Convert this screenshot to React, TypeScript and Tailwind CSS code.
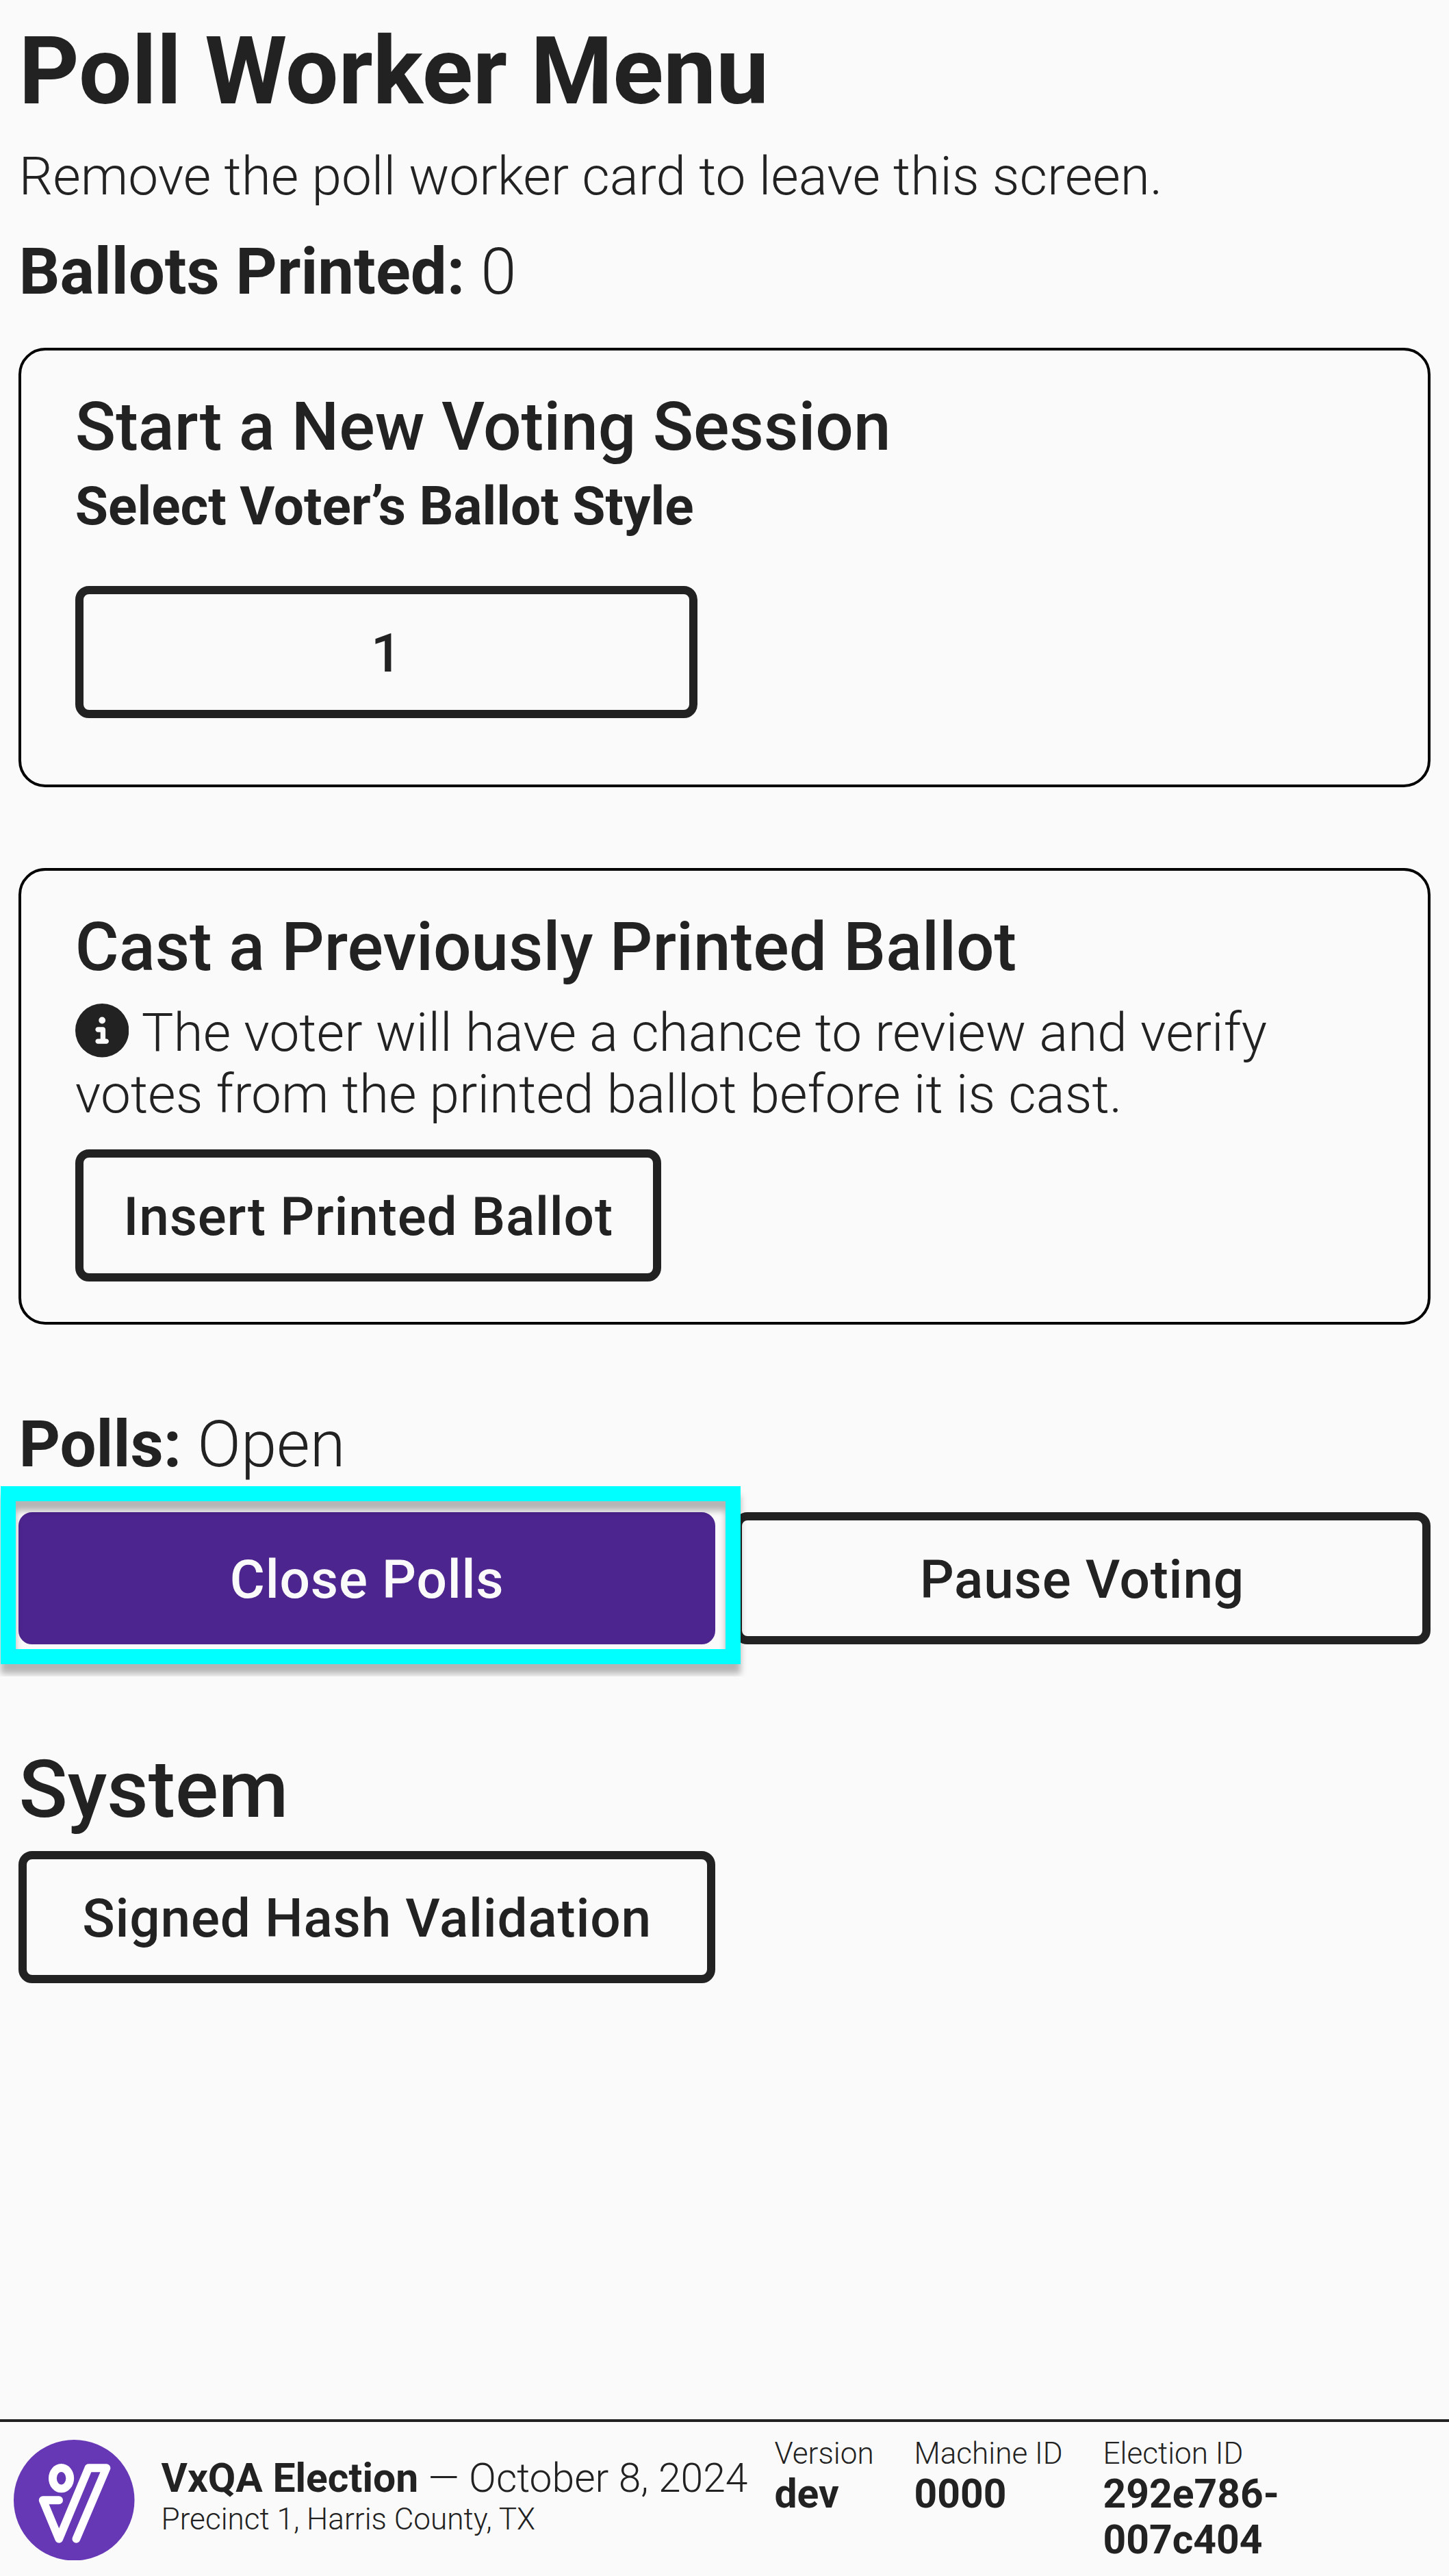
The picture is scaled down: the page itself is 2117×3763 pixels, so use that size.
import type { ReactNode } from "react";

function Button({ children, className }: { children: ReactNode; className: string }) {
  return (
    <button
      className={`flex h-[193px] items-center justify-center rounded-[20px] border-[12px] pt-[3px] text-[78.4px] font-medium leading-[90px] tracking-[0.8px] ${className}`}
    >
      {children}
    </button>
  );
}

function Card({ children, className }: { children: ReactNode; className: string }) {
  return (
    <section className={`rounded-[39px] border-4 border-black px-[78.4px] pt-[55px] ${className}`}>{children}</section>
  );
}

function InfoIcon() {
  return (
    <svg viewBox="0 0 512 512" className="mr-[1px] inline-block size-[78.4px] align-[-9.5px]" fill="currentColor">
      <path d="M256 512A256 256 0 1 0 256 0a256 256 0 1 0 0 512zM216 336h24V272H216c-13.300 0-24-10.700-24-24s10.700-24 24-24h48c13.300 0 24 10.700 24 24v88h8c13.300 0 24 10.700 24 24s-10.700 24-24 24H216c-13.300 0-24-10.700-24-24s10.700-24 24-24zm40-208a32 32 0 1 1 0 64 32 32 0 1 1 0-64z" />
    </svg>
  );
}

function Logo() {
  return (
    <svg viewBox="60 69 529 529" className="ml-[20px] mt-[25.5px] size-[176.500px] shrink-0" fill="none">
      <circle cx="324.500" cy="333.500" r="264.500" fill="#6638b6" />
      <g stroke="#fff" strokeWidth="35.500" strokeLinecap="round" strokeLinejoin="round">
        <ellipse cx="268.500" cy="237.500" rx="38" ry="45.500" />
        <path d="M258 333.500H188L258.500 503L388 192.500H466L334 503" />
      </g>
    </svg>
  );
}

function Info({ label, value, className }: { label: string; value: string; className: string }) {
  return (
    <div className={className}>
      <div className="text-[44.100px] leading-[51px]">{label}</div>
      <div className="-mt-[1px] font-bold">{value}</div>
    </div>
  );
}

export default function App() {
  return (
    <div className="flex h-[3763px] w-[2117px] flex-col overflow-hidden bg-[#fafafa] font-['Roboto',sans-serif] text-[78.4px] font-light leading-[90px] text-[#222222]">
      <main className="flex-1 px-[27.44px] pt-[25px]">
        <h1 className="text-[137.2px] font-bold leading-[158px]">Poll Worker Menu</h1>
        <p className="mt-[29px]">Remove the poll worker card to leave this screen.</p>
        <p className="mt-[41px] text-[94.1px] leading-[108px]">
          <b className="font-bold">Ballots Printed:</b> 0
        </p>

        <Card className="mt-[57px] h-[642px]">
          <h3 className="text-[98px] font-medium leading-[113px]">Start a New Voting Session</h3>
          <h4 className="mt-[14px] font-bold">Select Voter’s Ballot Style</h4>
          <Button className="mt-[72px] w-[909.6px] border-[#222222]">1</Button>
        </Card>

        <Card className="mt-[118px] h-[667px]">
          <h3 className="text-[98px] font-medium leading-[113px]">Cast a Previously Printed Ballot</h3>
          <p className="mt-[23px] h-[180px]">
            <InfoIcon /> The voter will have a chance to review and verify votes from the printed ballot before it is
            cast.
          </p>
          <Button className="mt-[36px] w-[856.4px] border-[#222222]">Insert Printed Ballot</Button>
        </Card>

        <p className="mt-[121px] text-[94.1px] leading-[108px]">
          <b className="font-bold">Polls:</b> Open
        </p>
        <div className="mt-[45px] grid grid-cols-2 gap-[27.44px]">
          <div className="relative">
            <Button className="w-full border-[#4d258f] bg-[#4d258f] text-[#fafafa]">Close Polls</Button>
            <div className="pointer-events-none absolute -top-[38px] -left-[26.44px] h-[260px] w-[1081px] border-[22px] border-[#00ffff] drop-shadow-[0_14px_5px_rgba(0,0,0,0.28)] [clip-path:inset(-18px)]" />
          </div>
          <Button className="w-full border-[#222222]">Pause Voting</Button>
        </div>

        <h2 className="mt-[145px] text-[117.6px] font-medium leading-[135px]">System</h2>
        <Button className="mt-[22px] w-[1017.4px] border-[#222222]">Signed Hash Validation</Button>
      </main>

      <footer className="flex h-[229px] shrink-0 border-t-4 border-[#222222] text-[58.8px] leading-[67px]">
        <Logo />
        <div className="ml-[39px] mt-[48px] w-[896px] shrink-0 whitespace-nowrap">
          <div>
            <b className="font-bold">VxQA Election</b> — October 8, 2024
          </div>
          <div className="mt-[2px] text-[44.100px] leading-[51px]">Precinct 1, Harris County, TX</div>
        </div>
        <Info label="Version" value="dev" className="mt-[21px] w-[204px]" />
        <Info label="Machine ID" value="0000" className="mt-[21px] w-[276px]" />
        <Info label="Election ID" value="292e786-007c404" className="mt-[21px] w-[300px]" />
      </footer>
    </div>
  );
}
